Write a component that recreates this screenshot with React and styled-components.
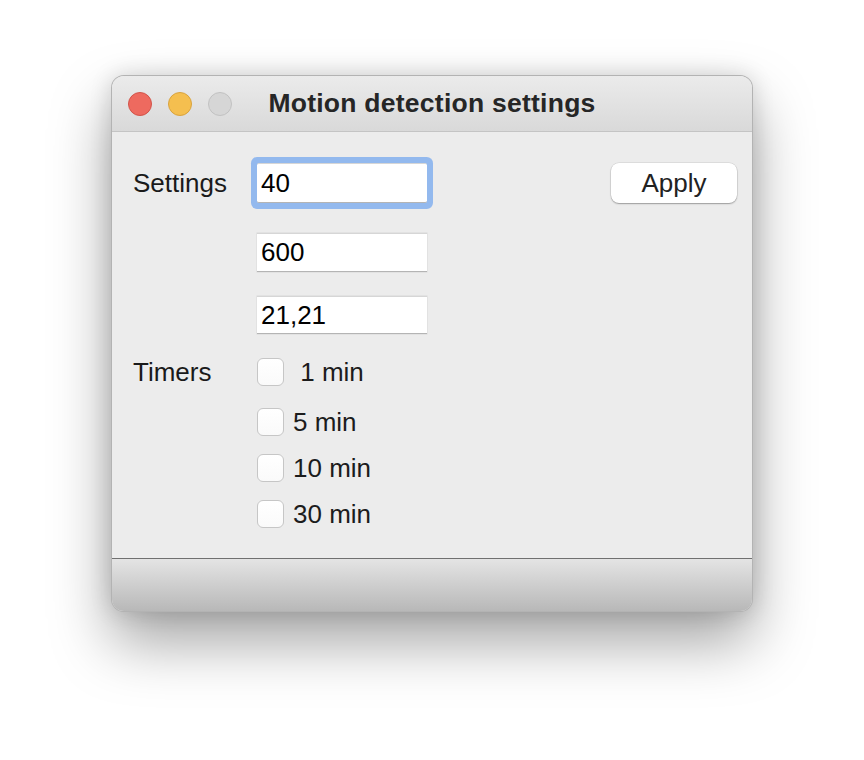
import React from "react";
import styled, { createGlobalStyle } from "styled-components";

const GlobalStyle = createGlobalStyle`
  html, body {
    margin: 0;
    background: #ffffff;
  }
  * {
    box-sizing: border-box;
  }
`;

const timers = ["\u00a01 min", "5 min", "10 min", "30 min"];
const timerGaps = [24, 22, 18, 18];

function App() {
  return (
    <Page>
      <GlobalStyle />
      <Window>
        <TitleBar>
          <Lights>
            <Light $color="#ee6a5f" $edge="#d2544a" />
            <Light $color="#f5bf4f" $edge="#d9a33e" />
            <Light $color="#d6d6d6" $edge="#c2c2c2" />
          </Lights>
          <Title>Motion detection settings</Title>
          <span />
        </TitleBar>

        <Content>
          <Row>
            <Label>Settings</Label>
            <Field $focused defaultValue="40" />
            <Spacer />
            <Button>Apply</Button>
          </Row>
          <Row $gap={30}>
            <Label />
            <Field $h={39} defaultValue="600" />
          </Row>
          <Row $gap={24}>
            <Label />
            <Field $h={38} defaultValue="21,21" />
          </Row>

          {timers.map((t, i) => (
            <Row key={t} $gap={timerGaps[i]}>
              <Label>{i === 0 ? "Timers" : ""}</Label>
              <Check>
                <Box />
                <CheckText>{t}</CheckText>
              </Check>
            </Row>
          ))}
        </Content>

        <Footer />
      </Window>
    </Page>
  );
}

const Page = styled.div`
  width: 864px;
  height: 760px;
  padding: 75px 0 0 111px;
  font-family: "Liberation Sans", Arial, sans-serif;
  color: #1c1c1c;
`;

const Window = styled.div`
  width: 642px;
  border: 1px solid rgba(0, 0, 0, 0.24);
  border-radius: 13px;
  overflow: hidden;
  background: #ececec;
  box-shadow: 0 30px 60px rgba(0, 0, 0, 0.36), 0 0 22px rgba(0, 0, 0, 0.14);
`;

const TitleBar = styled.div`
  height: 56px;
  display: grid;
  grid-template-columns: 1fr auto 1fr;
  align-items: center;
  padding: 0 16px;
  background: linear-gradient(#ebebeb, #d9d9d9);
  border-bottom: 1px solid #c4c4c4;
`;

const Lights = styled.div`
  display: flex;
  gap: 16px;
`;

const Light = styled.span`
  width: 24px;
  height: 24px;
  border-radius: 50%;
  background: ${(p) => p.$color};
  border: 1px solid ${(p) => p.$edge};
`;

const Title = styled.div`
  font-size: 26.5px;
  font-weight: bold;
  color: #262626;
  letter-spacing: 0.25px;
`;

const Content = styled.div`
  height: 426px;
  padding: 31px 15px 0 21px;
  display: flex;
  flex-direction: column;
`;

const Row = styled.div`
  display: flex;
  align-items: center;
  margin-top: ${(p) => p.$gap || 0}px;
`;

const Label = styled.div`
  width: 124px;
  flex-shrink: 0;
  font-size: 26px;
  line-height: 28px;
  color: #1a1a1a;
`;

const Field = styled.input`
  width: 170px;
  height: ${(p) => p.$h || 40}px;
  padding: 0 0 0 4px;
  border: none;
  border-top: 1px solid #d6d6d6;
  border-bottom: 1px solid #b4b4b4;
  background: #ffffff;
  font-family: "Liberation Sans", Arial, sans-serif;
  font-size: 26px;
  color: #000000;
  outline: none;
  border-radius: ${(p) => (p.$focused ? "2px" : "0")};
  box-shadow: ${(p) =>
    p.$focused ? "0 0 0 6px #93b9ee" : "0 0 0 0.5px rgba(0,0,0,0.08)"};
`;

const Spacer = styled.div`
  flex: 1;
`;

const Button = styled.button`
  width: 126px;
  height: 40px;
  border: none;
  border-radius: 8px;
  background: #ffffff;
  font-family: "Liberation Sans", Arial, sans-serif;
  font-size: 26px;
  color: #222222;
  box-shadow: 0 1px 1.5px rgba(0, 0, 0, 0.3), 0 0 0 0.5px rgba(0, 0, 0, 0.12);
`;

const Check = styled.label`
  display: flex;
  align-items: center;
  gap: 9px;
`;

const Box = styled.span`
  width: 27px;
  height: 28px;
  border-radius: 6px;
  border: 1px solid #c6c6c6;
  background: linear-gradient(#ffffff, #fafafa);
`;

const CheckText = styled.span`
  font-size: 26px;
  line-height: 28px;
  color: #1c1c1c;
`;

const Footer = styled.div`
  height: 53px;
  border-top: 1px solid #707070;
  background: linear-gradient(#e4e4e4, #b8b8b8);
`;

export default App;
